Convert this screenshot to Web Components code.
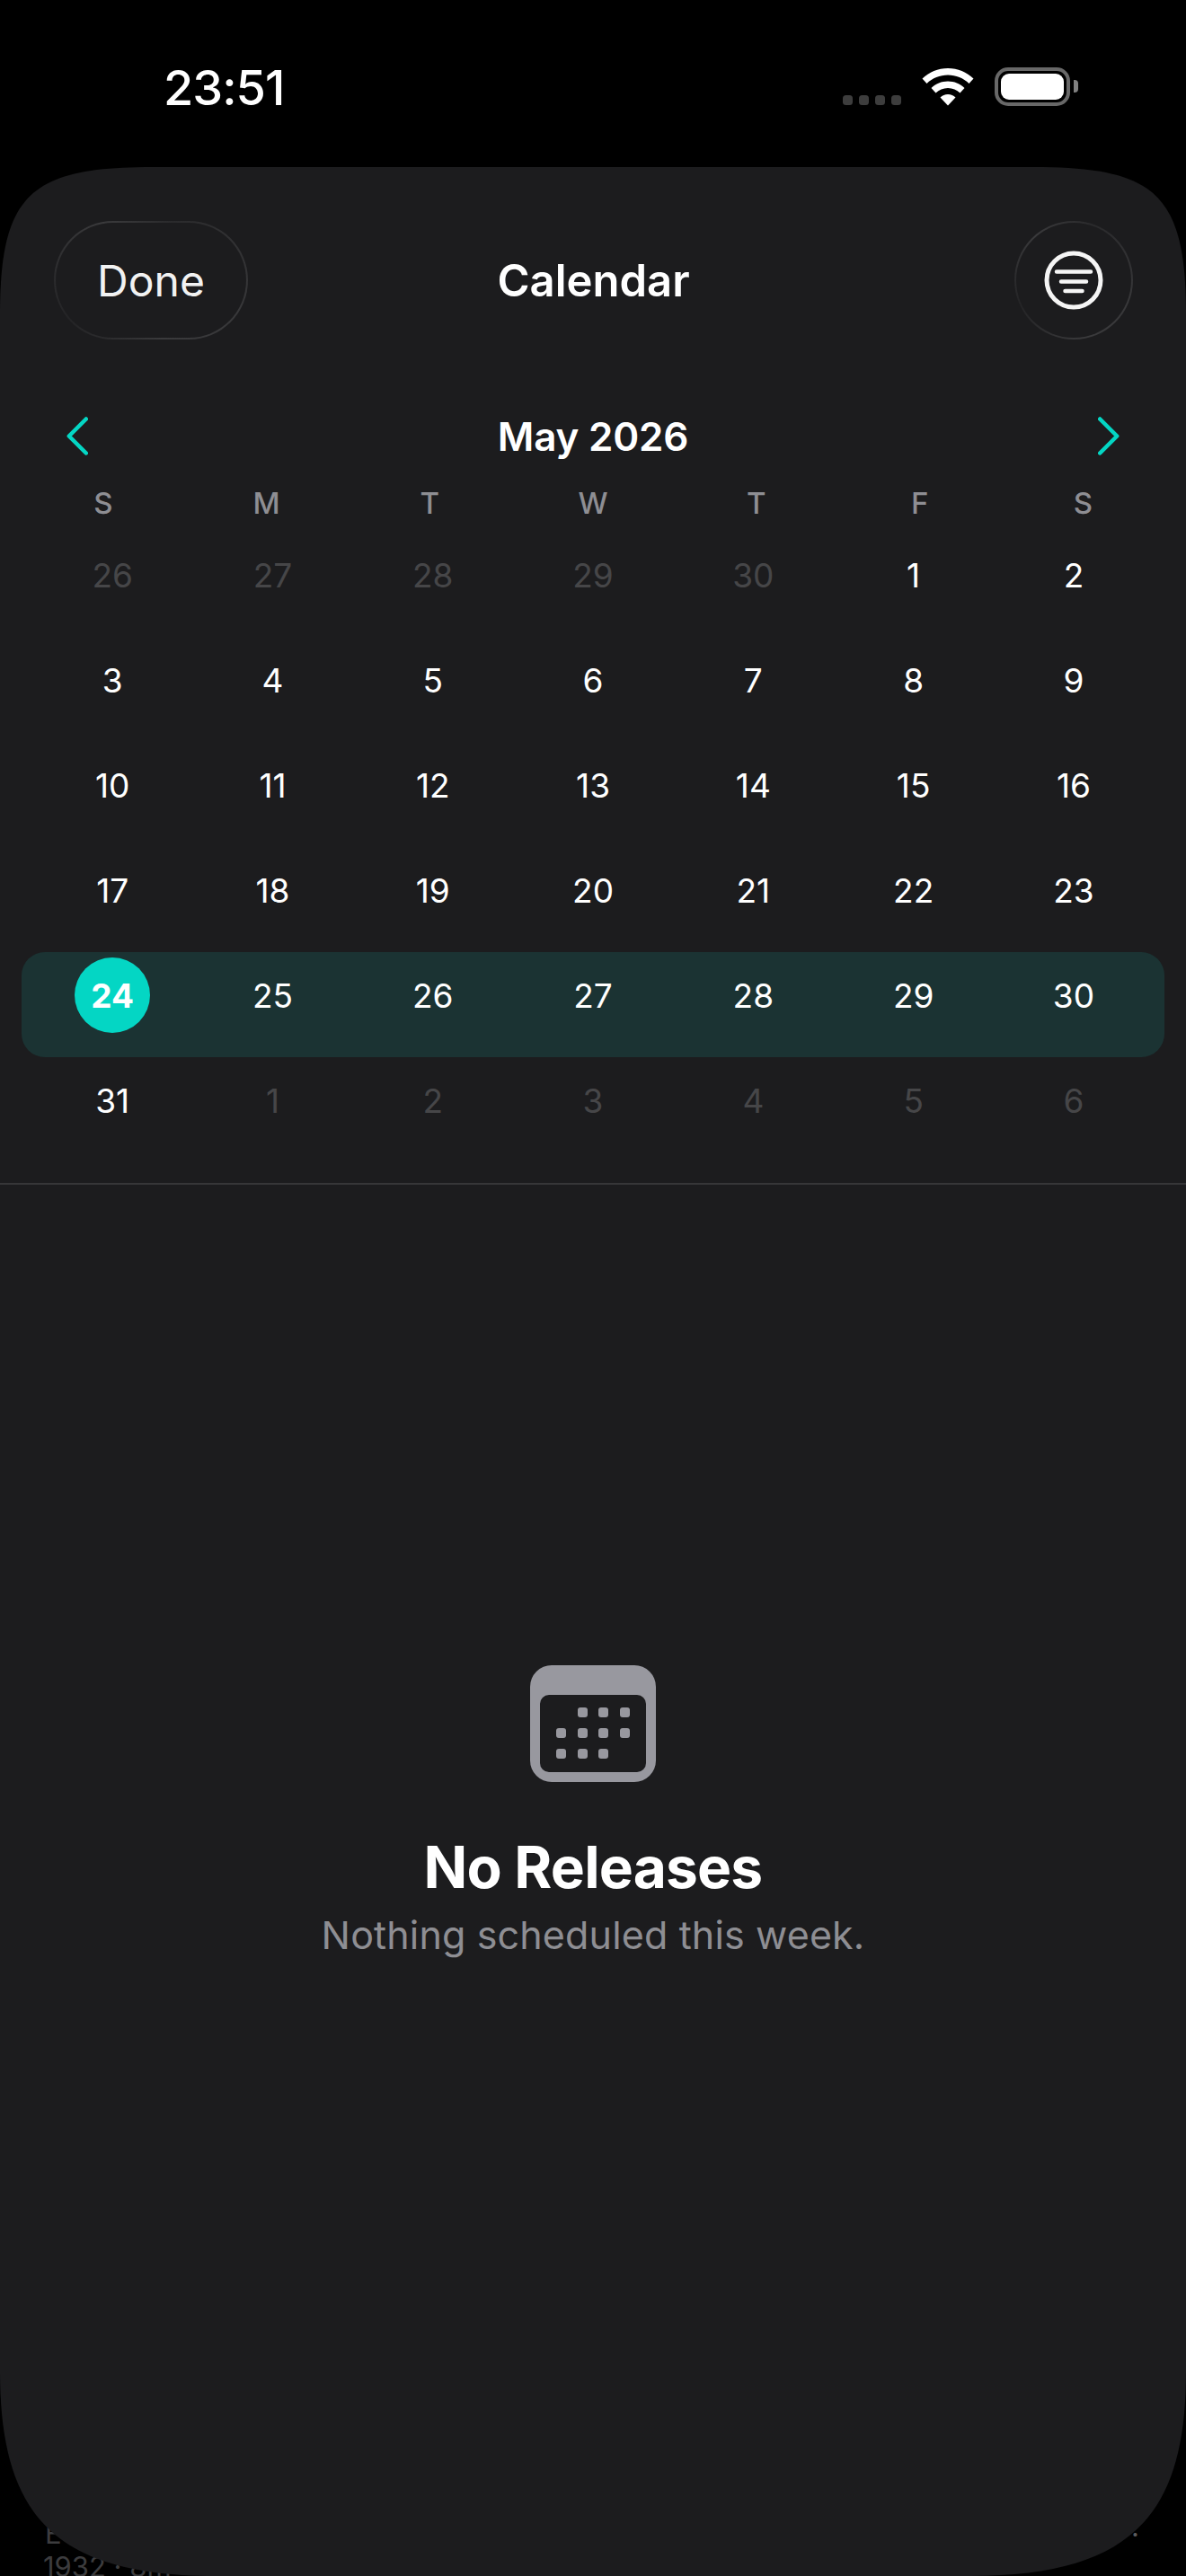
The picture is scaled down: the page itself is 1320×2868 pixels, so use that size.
<!DOCTYPE html>
<html>
<head>
<meta charset="utf-8">
<title>Calendar</title>
<style>
  html, body { margin: 0; background: #000; }
  body { width: 1320px; height: 2868px; overflow: hidden; position: relative; font-family: Inter, "Liberation Sans", sans-serif; color: #fff; }
</style>
</head>
<body>
<behind-sheet></behind-sheet>
<status-bar></status-bar>
<calendar-sheet>
  <nav-bar></nav-bar>
  <month-grid></month-grid>
  <empty-state></empty-state>
</calendar-sheet>

<script>
// helper, every element just sets its shadow markup once
function shadow(el, html) {
  el.attachShadow({ mode: 'open' }).innerHTML = html
}

customElements.define('behind-sheet', class extends HTMLElement {
  constructor() {
    super()
    shadow(this, `<style>
      :host { position: absolute; left: 0; top: 0; width: 1320px; height: 2868px; overflow: hidden; font-size: 31px; color: #3c3c3e; }
      span { position: absolute; white-space: nowrap; }
      .a { left: 50px; top: 2803px; line-height: 36px; }
      .b { left: 48px; top: 2848px; line-height: 20px; }
      .c { left: 1259px; top: 2795px; line-height: 36px; color: #5c5c5e; }
    </style>
    <span class="a">E</span><span class="b">1932 · 8m</span><span class="c">.</span>`)
  }
})

customElements.define('status-bar', class extends HTMLElement {
  constructor() {
    super()
    shadow(this, `<style>
      :host { display: flex; position: relative; height: 186px; box-sizing: border-box; }
      .time { margin: 66px 0 0 182px; font-size: 54px; line-height: 64px; font-weight: 550; letter-spacing: -1px; }
      .right { margin-left: auto; margin-right: 120px; display: flex; align-items: flex-start; padding-top: 75px; }
      .dots { display: flex; gap: 7px; margin-top: 31px; margin-right: 23px; }
      .dots i { width: 11px; height: 11px; border-radius: 3.5px; background: #3d3d3d; }
      svg { display: block; }
      .wifi { margin-top: 1px; margin-right: 23px; }
      .batt { width: 84px; height: 43px; box-sizing: border-box; border: 4px solid #686868; border-radius: 15px; padding: 3px; }
      .batt b { display: block; height: 100%; background: #fff; border-radius: 9px; }
      .nub { width: 5px; height: 14px; margin: 14px 0 0 4px; background: #808080; border-radius: 0 4px 4px 0; }
    </style>
    <div class="time">23:51</div>
    <div class="right">
      <div class="dots"><i></i><i></i><i></i><i></i></div>
      <svg class="wifi" width="58" height="42" viewBox="0 0 58 42">
        <path fill="#fff" d="M29 0C18 0 8 4.300 0.500 11.500L5.500 17C11.800 11 20 7.500 29 7.500S46.200 11 52.500 17L57.500 11.500C50 4.300 40 0 29 0Z"/>
        <path fill="#fff" d="M29 14.500C22 14.500 15.500 17.200 10.500 22L15.500 27.500C19 24.100 23.800 22 29 22S39 24.100 42.500 27.500L47.500 22C42.500 17.200 36 14.500 29 14.500Z"/>
        <path fill="#fff" d="M29 29C25.700 29 22.700 30.300 20.500 32.400L29 41.500L37.500 32.400C35.300 30.300 32.300 29 29 29Z"/>
      </svg>
      <div class="batt"><b></b></div>
      <div class="nub"></div>
    </div>`)
  }
})

customElements.define('calendar-sheet', class extends HTMLElement {
  constructor() {
    super()
    shadow(this, `<style>
      :host {
        display: flex; flex-direction: column; position: relative;
        height: 2682px; background: #1c1c1e;
        clip-path: path('M0 164C0 29 35 0 170 0L1150 0C1285 0 1320 29 1320 164L1320 2454C1320 2614 1260 2682 1080 2682L240 2682C60 2682 0 2614 0 2454Z');
      }
    </style><slot></slot>`)
  }
})

customElements.define('nav-bar', class extends HTMLElement {
  constructor() {
    super()
    shadow(this, `<style>
      :host { display: grid; grid-template-columns: 1fr auto 1fr; align-items: center; padding: 60px 59px 0 60px; height: 132px; }
      .glass {
        box-sizing: border-box; height: 132px; border: 2px solid transparent; border-radius: 66px;
        background:
          linear-gradient(#1c1c1e, #1c1c1e) padding-box,
          conic-gradient(from 20deg, #2a2a2c, #38383a 90deg, #3a3a3c 150deg, #242426 225deg, #3a3a3c 300deg, #2a2a2c) border-box;
        display: flex; align-items: center; justify-content: center;
      }
      .done { width: 216px; font-size: 48px; color: #f2f2f2; justify-self: start; }
      .filter { width: 132px; justify-self: end; }
      h1 { margin: 0; font-size: 49px; font-weight: 600; }
      svg { display: block; }
    </style>
    <div class="glass done">Done</div>
    <h1>Calendar</h1>
    <div class="glass filter">
      <svg width="66" height="66" viewBox="0 0 66 66" fill="none" stroke="#f5f5f5">
        <circle cx="33" cy="33" r="30" stroke-width="5"/>
        <path stroke-width="4.500" stroke-linecap="round" d="M14 23.500H52M19 34.500H47M23.500 45H42.500"/>
      </svg>
    </div>`)
  }
})

const prevDays = [26, 27, 28, 29, 30]
const monthDays = Array.from({ length: 31 }, (_, i) => i + 1)
const nextDays = [1, 2, 3, 4, 5, 6]

customElements.define('month-grid', class extends HTMLElement {
  constructor() {
    super()
    const cells = [
      ...prevDays.map((d) => ({ d, dim: true })),
      ...monthDays.map((d) => ({ d })),
      ...nextDays.map((d) => ({ d, dim: true })),
    ]
    const rows = []
    for (let i = 0; i < cells.length; i += 7) rows.push(cells.slice(i, i + 7))
    const rowHtml = rows.map((row, i) => `<div class="row${i === 4 ? ' week' : ''}">${row
      .map((c) => `<span class="${c.dim ? 'dim' : ''}${c.d === 24 ? 'today' : ''}">${c.d === 24 ? '<b>24</b>' : c.d}</span>`)
      .join('')}</div>`).join('')
    shadow(this, `<style>
      :host { display: block; padding: 78px 0 23px; border-bottom: 2px solid #363638; }
      .head { display: flex; align-items: center; justify-content: space-between; padding: 0 74px; height: 60px; }
      .head h2 { margin: 0; font-size: 44px; font-weight: 600; letter-spacing: -.2px; }
      svg { display: block; }
      .wk { display: grid; grid-template-columns: repeat(7, 181.75px); padding: 0 24px; margin-top: 22px; height: 44px; line-height: 44px; text-align: center; font-size: 33px; font-weight: 500; color: #8e8e93; }
      .rows { padding-top: 10px; }
      .row { box-sizing: border-box; display: grid; grid-template-columns: repeat(7, 178.3px); margin: 0 24px; padding: 6px 12px 0; height: 117px; grid-auto-rows: 84px; align-items: center; justify-items: center; font-size: 37px; font-weight: 370; }
      .week { background: #1b3333; border-radius: 26px; }
      .dim { color: #464648; }
      .today { width: 84px; height: 84px; border-radius: 50%; background: #04d6c4; display: flex; align-items: center; justify-content: center; }
      .today b { font-weight: 700; }
    </style>
    <div class="head">
      <svg width="24" height="44" viewBox="0 0 24 44" fill="none" stroke="#04d6c4" stroke-width="4.500" stroke-linecap="round" stroke-linejoin="round"><path d="M21.800 2.500L2.800 21.500L21.800 40.500"/></svg>
      <h2>May 2026</h2>
      <svg width="24" height="44" viewBox="0 0 24 44" fill="none" stroke="#04d6c4" stroke-width="4.500" stroke-linecap="round" stroke-linejoin="round"><path d="M2.200 2.500L21.200 21.500L2.200 40.500"/></svg>
    </div>
    <div class="wk"><span>S</span><span>M</span><span>T</span><span>W</span><span>T</span><span>F</span><span>S</span></div>
    <div class="rows">${rowHtml}</div>`)
  }
})

customElements.define('empty-state', class extends HTMLElement {
  constructor() {
    super()
    const dots = [
      [643, 1901], [666, 1901], [690, 1901],
      [619, 1924], [643, 1924], [666, 1924], [690, 1924],
      [619, 1947], [643, 1947], [666, 1947],
    ].map(([x, y]) => `<rect x="${x - 590}" y="${y - 1854}" width="11" height="11" rx="3" fill="#98989f"/>`).join('')
    shadow(this, `<style>
      :host { display: flex; flex-direction: column; align-items: center; padding-top: 535px; }
      svg { display: block; }
      h3 { margin: 55.5px 0 0; font-size: 64px; line-height: 78px; font-weight: 700; letter-spacing: -.8px; }
      p { margin: 8px 0 0; font-size: 43px; line-height: 56px; color: #8e8e93; letter-spacing: .15px; }
    </style>
    <svg width="140" height="130" viewBox="0 0 140 130">
      <path fill="#98989f" fill-rule="evenodd" d="M24 0H116A24 24 0 0 1 140 24V106A24 24 0 0 1 116 130H24A24 24 0 0 1 0 106V24A24 24 0 0 1 24 0ZM21 33A10 10 0 0 0 11 43V109A10 10 0 0 0 21 119H119A10 10 0 0 0 129 109V43A10 10 0 0 0 119 33Z"/>
      ${dots}
    </svg>
    <h3>No Releases</h3>
    <p>Nothing scheduled this week.</p>`)
  }
})
</script>
</body>
</html>
